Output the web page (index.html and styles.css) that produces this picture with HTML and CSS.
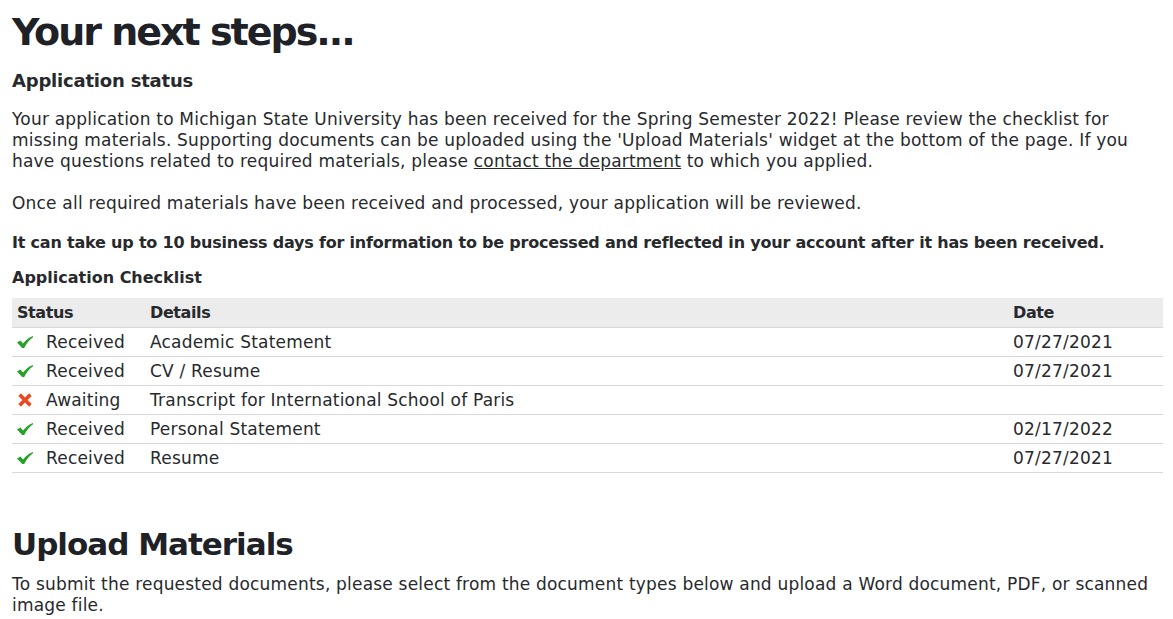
FILE: index.html
```html
<!DOCTYPE html>
<html lang="en">
<head>
<meta charset="utf-8">
<title>Your next steps</title>
<link rel="stylesheet" href="styles.css">
</head>
<body>
<main class="page">
  <h1 class="title">Your next steps...</h1>
  <h2 class="subtitle">Application status</h2>
  <p class="text">Your application to Michigan State University has been received for the Spring Semester 2022! Please review the checklist for missing materials. Supporting documents can be uploaded using the 'Upload Materials' widget at the bottom of the page. If you have questions related to required materials, please <a class="link" href="#">contact the department</a> to which you applied.</p>
  <p class="text gap">Once all required materials have been received and processed, your application will be reviewed.</p>
  <p class="text strong">It can take up to 10 business days for information to be processed and reflected in your account after it has been received.</p>
  <h3 class="checklist-title">Application Checklist</h3>
  <table class="checklist">
    <thead>
      <tr><th class="c-status">Status</th><th class="c-details">Details</th><th class="c-date">Date</th></tr>
    </thead>
    <tbody>
      <tr><td class="c-status"><span class="status"><svg class="ico" viewBox="0 0 16 16"><path d="M0 8.4 L3.4 6.6 L6 9.6 Q10 4.4 16 2 L16 3.2 Q10.8 6.8 7.2 14 L5.2 14 Z" fill="#26a22a"/></svg>Received</span></td><td>Academic Statement</td><td>07/27/2021</td></tr>
      <tr><td class="c-status"><span class="status"><svg class="ico" viewBox="0 0 16 16"><path d="M0 8.4 L3.4 6.6 L6 9.6 Q10 4.4 16 2 L16 3.2 Q10.8 6.8 7.2 14 L5.2 14 Z" fill="#26a22a"/></svg>Received</span></td><td>CV / Resume</td><td>07/27/2021</td></tr>
      <tr><td class="c-status"><span class="status"><svg class="ico" viewBox="0 0 16 16"><path d="M1.3 3.9 L3.9 1.3 L8 5.4 L12.1 1.3 L14.7 3.9 L10.6 8 L14.7 12.1 L12.1 14.7 L8 10.6 L3.9 14.7 L1.3 12.1 L5.4 8 Z" fill="#ea4a1f"/></svg>Awaiting</span></td><td>Transcript for International School of Paris</td><td></td></tr>
      <tr><td class="c-status"><span class="status"><svg class="ico" viewBox="0 0 16 16"><path d="M0 8.4 L3.4 6.6 L6 9.6 Q10 4.4 16 2 L16 3.2 Q10.8 6.8 7.2 14 L5.2 14 Z" fill="#26a22a"/></svg>Received</span></td><td>Personal Statement</td><td>02/17/2022</td></tr>
      <tr><td class="c-status"><span class="status"><svg class="ico" viewBox="0 0 16 16"><path d="M0 8.4 L3.4 6.6 L6 9.6 Q10 4.4 16 2 L16 3.2 Q10.8 6.8 7.2 14 L5.2 14 Z" fill="#26a22a"/></svg>Received</span></td><td>Resume</td><td>07/27/2021</td></tr>
    </tbody>
  </table>
  <h2 class="upload-title">Upload Materials</h2>
  <p class="text">To submit the requested documents, please select from the document types below and upload a Word document, PDF, or scanned image file.</p>
</main>
</body>
</html>
```
FILE: styles.css
```css
html, body {
  margin: 0;
  padding: 0;
  background: #ffffff;
}
body {
  font-family: "DejaVu Sans", sans-serif;
  color: #27292d;
}
.page {
  padding: 0 10px 0 12px;
}
.title {
  margin: 0;
  padding-top: 8px;
  font-size: 38px;
  line-height: 48px;
  letter-spacing: -2px;
  font-weight: 700;
  color: #1e2126;
}
.subtitle {
  margin: 14px 0 0;
  font-size: 18px;
  line-height: 22px;
  letter-spacing: -0.2px;
  font-weight: 700;
}
.text {
  margin: 17px 0 0;
  font-size: 17px;
  line-height: 21px;
  letter-spacing: 0.2px;
}
.text.gap {
  margin-top: 21px;
}
.text.strong {
  font-size: 16px;
  letter-spacing: -0.2px;
  font-weight: 700;
  margin-top: 18px;
}
.link {
  color: inherit;
  text-decoration: underline;
}
.checklist-title {
  margin: 14px 0 0;
  font-size: 16px;
  line-height: 22px;
  font-weight: 700;
}
.checklist {
  width: 100%;
  margin-top: 9px;
  border-collapse: collapse;
  table-layout: fixed;
  font-size: 17px;
  letter-spacing: 0.2px;
}
.checklist th {
  background: #ececec;
  text-align: left;
  font-size: 16px;
  letter-spacing: -0.4px;
  font-weight: 700;
  height: 29px;
  padding: 1px 5px 0;
  box-sizing: border-box;
  border-bottom: 1px solid #d8d8d8;
}
.checklist td {
  height: 29px;
  padding: 0 5px;
  box-sizing: border-box;
  border-bottom: 1px solid #d8d8d8;
}
.c-status {
  width: 133px;
}
.c-date {
  width: 155px;
}
.status {
  display: flex;
  align-items: center;
  gap: 13px;
}
.ico {
  width: 16px;
  height: 16px;
  flex: none;
}
.upload-title {
  margin: 51px 0 0;
  font-size: 31px;
  line-height: 40px;
  letter-spacing: -1px;
  font-weight: 700;
  color: #1e2126;
}
.upload-title + .text {
  margin-top: 10px;
}
```
